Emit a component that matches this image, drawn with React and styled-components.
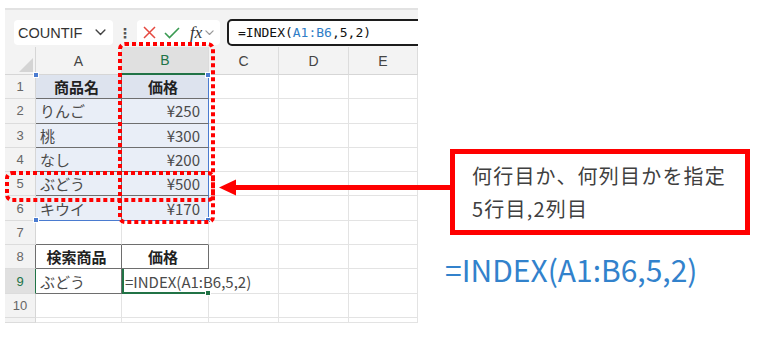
import React from 'react';
import styled, { createGlobalStyle } from 'styled-components';

const GlobalStyle = createGlobalStyle`
  html, body { margin: 0; padding: 0; background: #ffffff; }
  body { font-family: "Noto Sans CJK JP", "Liberation Sans", sans-serif; }
`;

const Page = styled.div`
  position: relative;
  width: 770px;
  height: 337px;
  display: flex;
  align-items: flex-start;
  overflow: hidden;
`;

const Sheet = styled.div`
  position: relative;
  margin: 8px 0 0 5px;
  width: 413px;
  flex-shrink: 0;
  background: #f3f3f3;
  overflow: hidden;
`;

const Toolbar = styled.div`
  display: flex;
  align-items: flex-start;
  height: 39px;
  box-sizing: border-box;
  padding: 9px 0 0 9px;
  border-top: 2px solid #e2e2e2;
  & > * { flex-shrink: 0; }
`;

const NameBox = styled.div`
  width: 99px;
  height: 25px;
  margin-top: 1px;
  box-sizing: border-box;
  background: #fff;
  border-radius: 4px;
  display: flex;
  align-items: center;
  justify-content: space-between;
  padding: 0 7px 0 4px;
  font: 14.5px "Liberation Sans", Arial, sans-serif;
  color: #333;
`;

const Grip = styled.div`
  width: 24px;
  height: 27px;
  display: flex;
  align-items: center;
  justify-content: center;
  color: #555;
  font: bold 14px "DejaVu Sans", sans-serif;
`;

const FnBox = styled.div`
  width: 83px;
  height: 25px;
  margin-top: 1px;
  box-sizing: border-box;
  background: #fff;
  border-radius: 4px;
  display: flex;
  align-items: center;
  padding-left: 6px;
  gap: 8px;
`;

const Fx = styled.span`
  font: italic 17px "Liberation Serif", serif;
  color: #333;
  margin-left: 2px;
  margin-right: -5px;
`;

const FormulaBar = styled.div`
  margin-left: 7px;
  width: 210px;
  height: 27px;
  box-sizing: border-box;
  border: 2px solid #1c1c1c;
  border-radius: 5px;
  background: #fff;
  display: flex;
  align-items: center;
  padding-left: 9px;
  font: 13px "DejaVu Sans Mono", monospace;
  color: #111;
  white-space: nowrap;
`;

const Ref = styled.span`
  color: #2f7ec7;
`;

const Grid = styled.div`
  display: grid;
  grid-template-columns: 31px 86px 87px 70px 70px 69px;
  grid-template-rows: 28px repeat(10, 24.3px) 5px;
  background: #fff;
`;

const Corner = styled.div`
  background: #f3f3f3;
  border-right: 1px solid #d6d6d6;
  border-bottom: 1px solid #d6d6d6;
  display: flex;
  align-items: flex-end;
  justify-content: flex-end;
  padding: 0 2px 2px 0;
`;

const ColHead = styled.div`
  box-sizing: border-box;
  background: ${p => (p.$active ? '#e0e0e0' : '#f3f3f3')};
  color: ${p => (p.$active ? '#217346' : '#444')};
  border-right: 1px solid #dcdcdc;
  border-bottom: ${p => (p.$active ? '2px solid #217346' : '1px solid #d6d6d6')};
  display: flex;
  align-items: center;
  justify-content: center;
  font: 14px "Liberation Sans", Arial, sans-serif;
`;

const RowHead = styled.div`
  box-sizing: border-box;
  min-height: 0;
  overflow: hidden;
  background: ${p => (p.$active ? '#e0e0e0' : '#f3f3f3')};
  color: ${p => (p.$active ? '#217346' : '#666')};
  border-right: 1px solid ${p => p.$edge || '#d6d6d6'};
  border-bottom: 1px solid #dcdcdc;
  display: flex;
  align-items: center;
  justify-content: center;
  font: 13px/1 "Liberation Sans", Arial, sans-serif;
`;

const Cell = styled.div`
  position: relative;
  min-height: 0;
  box-sizing: border-box;
  background: ${p => p.$bg || 'transparent'};
  border-right: 1px solid ${p => p.$br || '#e3e3e3'};
  border-bottom: 1px solid ${p => p.$bb || '#e3e3e3'};
  display: flex;
  align-items: center;
  justify-content: ${p => (p.$align === 'right' ? 'flex-end' : p.$align === 'center' ? 'center' : 'flex-start')};
  padding: 0 8px 0 ${p => (p.$active ? 3 : 4)}px;
  font-size: 15px;
  line-height: 1;
  font-weight: ${p => (p.$bold ? 700 : 400)};
  color: ${p => (p.$bold ? '#222' : '#4a4a4a')};
  white-space: nowrap;
  box-shadow: ${p => (p.$active ? 'inset 2px 0 0 #217346, inset 0 -1px 0 #217346' : 'none')};
  z-index: ${p => (p.$active ? 2 : 1)};
`;

const Handle = styled.span`
  position: absolute;
  width: 4px;
  height: 4px;
  background: ${p => p.$color};
  border: 1px solid #fff;
  ${p => (p.$top ? 'top: -3px;' : 'bottom: -3px;')}
  ${p => (p.$left ? 'left: -3px;' : 'right: -3px;')}
  z-index: 3;
`;

const Frame = styled.svg`
  position: absolute;
  pointer-events: none;
  z-index: 5;
  overflow: visible;
`;

const Side = styled.div`
  display: flex;
  flex-direction: column;
  padding: 149px 0 0 32px;
`;

const Callout = styled.div`
  width: 300px;
  height: 86px;
  box-sizing: border-box;
  border: 5px solid #ff0000;
  background: #fff;
  padding: 5px 0 0 17px;
  font-size: 20px;
  line-height: 33px;
  letter-spacing: 1.2px;
  color: #404040;
`;

const BigFormula = styled.div`
  margin: 14px 0 0 -5px;
  font-size: 30px;
  line-height: 40px;
  color: #3282cc;
  white-space: nowrap;
`;

const Arrow = styled.svg`
  position: absolute;
  left: 219px;
  top: 179px;
  z-index: 6;
`;

const HEAD = '#dde3ee';
const BODY = '#e9eef7';
const DARK = '#6e6e6e';
const BLUE = '#4a7bd0';
const GREEN = '#217346';

const Chevron = ({ size = 10, color = '#444' }) => (
  <svg width={size} height={size * 0.6} viewBox="0 0 10 6" fill="none">
    <path d="M1 1l4 4 4-4" stroke={color} strokeWidth="1.3" strokeLinecap="round" strokeLinejoin="round" />
  </svg>
);

const DottedFrame = ({ x, y, w, h }) => (
  <Frame width={w} height={h} style={{ left: x, top: y }}>
    <rect x="2" y="2" width={w - 4} height={h - 4} rx="5" fill="none"
      stroke="#ff0000" strokeWidth="4" strokeDasharray="4 3" />
  </Frame>
);

const tableRows = [
  ['商品名', '価格', true],
  ['りんご', '¥250'],
  ['桃', '¥300'],
  ['なし', '¥200'],
  ['ぶどう', '¥500'],
  ['キウイ', '¥170'],
];

function Row({ n, children, active, edge }) {
  return (
    <>
      <RowHead $active={active} $edge={edge}>{n}</RowHead>
      {children}
    </>
  );
}

const Empty = ({ count = 3 }) =>
  Array.from({ length: count }, (_, i) => <Cell key={i} />);

export default function App() {
  return (
    <>
      <GlobalStyle />
      <Page>
        <Sheet>
          <Toolbar>
            <NameBox>
              <span>COUNTIF</span>
              <Chevron size={11} />
            </NameBox>
            <Grip>⋮</Grip>
            <FnBox>
              <svg width="13" height="13" viewBox="0 0 13 13">
                <path d="M1 1l11 11M12 1L1 12" stroke="#e5483f" strokeWidth="1.5" />
              </svg>
              <svg width="16" height="12" viewBox="0 0 16 12" fill="none">
                <path d="M1 6l4.5 4.5L15 1" stroke="#3a9a52" strokeWidth="1.6" />
              </svg>
              <Fx>fx</Fx>
              <Chevron size={9} color="#999" />
            </FnBox>
            <FormulaBar>
              =INDEX(<Ref>A1:B6</Ref>,5,2)
            </FormulaBar>
          </Toolbar>

          <Grid>
            <Corner>
              <svg width="14" height="14" viewBox="0 0 14 14">
                <path d="M14 0V14H0Z" fill="#d4d4d4" />
              </svg>
            </Corner>
            <ColHead>A</ColHead>
            <ColHead $active>B</ColHead>
            <ColHead>C</ColHead>
            <ColHead>D</ColHead>
            <ColHead>E</ColHead>

            {tableRows.map(([a, b, head], i) => {
              const last = i === tableRows.length - 1;
              return (
                <Row key={i} n={i + 1}>
                  <Cell
                    $bg={head ? HEAD : BODY}
                    $bold={head}
                    $align={head ? 'center' : 'left'}
                    $br={DARK}
                    $bb={last ? BLUE : DARK}
                  >
                    {i === 0 && <Handle $color={BLUE} $top $left />}
                    {last && <Handle $color={BLUE} $left />}
                    {a}
                  </Cell>
                  <Cell
                    $bg={head ? HEAD : BODY}
                    $bold={head}
                    $align={head ? 'center' : 'right'}
                    $br={BLUE}
                    $bb={last ? BLUE : DARK}
                  >
                    {i === 0 && <Handle $color={BLUE} $top />}
                    {last && <Handle $color={BLUE} />}
                    {b}
                  </Cell>
                  <Empty />
                </Row>
              );
            })}

            <Row n={7}>
              <Cell $bb={DARK} />
              <Cell $bb={DARK} />
              <Empty />
            </Row>

            <Row n={8} edge={DARK}>
              <Cell $bold $align="center" $br={DARK} $bb={DARK}>検索商品</Cell>
              <Cell $bold $align="center" $br={DARK} $bb={DARK}>価格</Cell>
              <Empty />
            </Row>

            <Row n={9} active edge={GREEN}>
              <Cell $br={DARK} $bb={DARK}>ぶどう</Cell>
              <Cell $active $br="transparent" $bb={GREEN}>
                =INDEX(A1:B6,5,2)
                <Handle $color={GREEN} />
              </Cell>
              <Empty />
            </Row>

            <Row n={10}>
              <Cell />
              <Cell />
              <Empty />
            </Row>
            <Row>
              <Cell />
              <Cell />
              <Empty />
            </Row>
          </Grid>

          <DottedFrame x={113} y={34} w={97} h={182} />
          <DottedFrame x={0} y={163} w={210} h={31} />
        </Sheet>

        <Side>
          <Callout>
            何行目か、何列目かを指定
            <br />
            5行目,2列目
          </Callout>
          <BigFormula>=INDEX(A1:B6,5,2)</BigFormula>
        </Side>

        <Arrow width="234" height="17" viewBox="0 0 234 17">
          <path d="M0 8.5L17 0.5V16.5Z" fill="#ff0000" />
          <rect x="15" y="6" width="219" height="5" fill="#ff0000" />
        </Arrow>
      </Page>
    </>
  );
}
